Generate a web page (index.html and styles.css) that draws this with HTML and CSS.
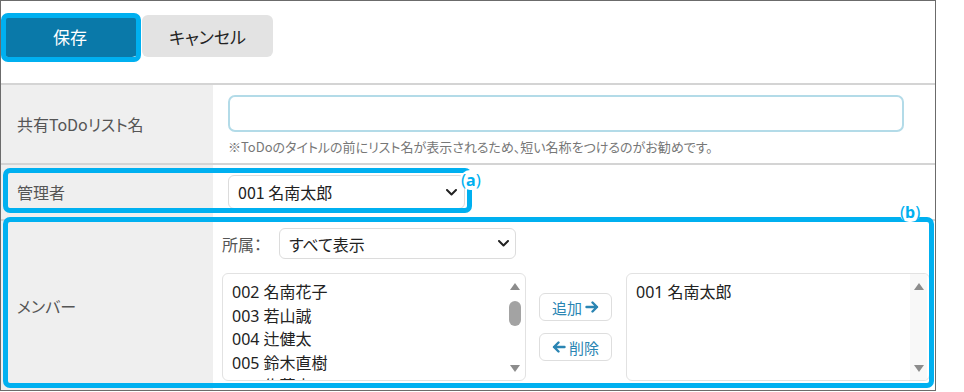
FILE: index.html
```html
<!DOCTYPE html>
<html lang="ja">
<head>
<meta charset="utf-8">
<title>共有ToDoリスト</title>
<link rel="stylesheet" href="styles.css">
</head>
<body>
<div class="frame">
  <div class="toolbar">
    <button class="btn btn-save">保存</button>
    <button class="btn btn-cancel">キャンセル</button>
  </div>
  <div class="form">
    <div class="row row-name">
      <div class="label">共有ToDoリスト名</div>
      <div class="value value-name">
        <div class="input"></div>
        <p class="hint">※ToDoのタイトルの前にリスト名が表示されるため、短い名称をつけるのがお勧めです。</p>
      </div>
    </div>
    <div class="row row-admin">
      <div class="label">管理者</div>
      <div class="value value-admin">
        <div class="select select-admin">
          <span>001 名南太郎</span>
          <svg class="chev" width="11" height="7" viewBox="0 0 11 7"><polyline points="1,1 5.5,5.5 10,1" fill="none" stroke="#222" stroke-width="2" stroke-linecap="round" stroke-linejoin="round"/></svg>
        </div>
      </div>
    </div>
    <div class="row row-member">
      <div class="label">メンバー</div>
      <div class="value value-member">
        <div class="filter">
          <span class="filter-label">所属：</span>
          <div class="select select-dept">
            <span>すべて表示</span>
            <svg class="chev" width="11" height="7" viewBox="0 0 11 7"><polyline points="1,1 5.5,5.5 10,1" fill="none" stroke="#222" stroke-width="2" stroke-linecap="round" stroke-linejoin="round"/></svg>
          </div>
        </div>
        <div class="picker">
          <div class="listbox">
            <ul class="items">
              <li>002 名南花子</li>
              <li>003 若山誠</li>
              <li>004 辻健太</li>
              <li>005 鈴木直樹</li>
              <li>006 佐藤恵</li>
            </ul>
            <div class="scrollbar">
              <svg width="10" height="7" viewBox="0 0 10 7"><polygon points="0,7 5,0 10,7" fill="#8c8c8c"/></svg>
              <span class="thumb"></span>
              <svg class="sb-down" width="10" height="7" viewBox="0 0 10 7"><polygon points="0,0 10,0 5,7" fill="#8c8c8c"/></svg>
            </div>
          </div>
          <div class="actions">
            <button class="act">追加<svg width="14" height="12" viewBox="0 0 14 12"><path d="M1.5 6H12M7.5 1.5L12 6l-4.5 4.5" fill="none" stroke="#2a85b3" stroke-width="2.4" stroke-linecap="round" stroke-linejoin="round"/></svg></button>
            <button class="act"><svg width="14" height="12" viewBox="0 0 14 12"><path d="M12.5 6H2M6.5 1.5L2 6l4.5 4.5" fill="none" stroke="#2a85b3" stroke-width="2.4" stroke-linecap="round" stroke-linejoin="round"/></svg>削除</button>
          </div>
          <div class="listbox listbox-right">
            <ul class="items">
              <li>001 名南太郎</li>
            </ul>
            <div class="scrollbar scrollbar-plain">
              <svg width="10" height="7" viewBox="0 0 10 7"><polygon points="0,7 5,0 10,7" fill="#8c8c8c"/></svg>
              <svg class="sb-down" width="10" height="7" viewBox="0 0 10 7"><polygon points="0,0 10,0 5,7" fill="#8c8c8c"/></svg>
            </div>
          </div>
        </div>
      </div>
    </div>
  </div>
  <div class="mark mark-save"></div>
  <div class="mark mark-a"></div>
  <div class="mark mark-b"></div>
  <span class="tag tag-a">(<b>a</b>)</span>
  <span class="tag tag-b">(<b>b</b>)</span>
</div>
</body>
</html>
```
FILE: styles.css
```css
body {
  margin: 0;
  background: #fff;
  font-family: "Noto Sans CJK JP", "Noto Sans", sans-serif;
  font-feature-settings: "palt";
}

.frame {
  position: relative;
  width: 936px;
  height: 391px;
  box-sizing: border-box;
  border: 1px solid #6b6b6b;
  overflow: hidden;
  background: #fff;
}

/* toolbar */
.toolbar {
  height: 84px;
  box-sizing: border-box;
  padding: 14px 0 0 1px;
  display: flex;
  align-items: flex-start;
  gap: 4px;
  border-bottom: 2px solid #d4d4d4;
}

.btn {
  height: 42px;
  border: none;
  border-radius: 6px;
  font-family: inherit;
  font-feature-settings: "palt";
  font-size: 17px;
  padding: 0;
}

.btn-save {
  width: 136px;
  background: #0a79a9;
  color: #fff;
}

.btn-cancel {
  width: 131px;
  background: #e3e3e3;
  color: #222;
}

/* form rows */
.row {
  display: flex;
  border-bottom: 2px solid #d4d4d4;
}

.label {
  width: 212px;
  flex: none;
  box-sizing: border-box;
  background: #efefef;
  display: flex;
  align-items: center;
  padding-left: 16px;
  font-size: 16px;
  color: #555;
}

.value {
  flex: 1;
  min-width: 0;
}

.value-name {
  padding: 10px 31px 7px 15px;
}

.input {
  height: 37px;
  box-sizing: border-box;
  border: 2px solid #b3dbe8;
  border-radius: 7px;
  background: #fff;
}

.hint {
  margin: 6px 0 0;
  font-size: 13px;
  line-height: 18px;
  color: #777;
}

.value-admin {
  padding: 10px 0 10px 15px;
}

.select {
  display: flex;
  align-items: center;
  justify-content: space-between;
  box-sizing: border-box;
  border: 1px solid #dcdcdc;
  border-radius: 6px;
  background: #fff;
  font-size: 16px;
  color: #222;
}

.select-admin {
  width: 237px;
  height: 34px;
  padding: 0 7px 0 9px;
}

.value-member {
  padding: 7px 6px 9px 9px;
}

.filter {
  display: flex;
  align-items: center;
  height: 31px;
}

.filter-label {
  width: 57px;
  font-size: 16px;
  color: #555;
}

.select-dept {
  width: 237px;
  height: 31px;
  padding: 0 6px 0 9px;
}

.picker {
  display: flex;
  margin-top: 14px;
  gap: 13px;
}

.listbox {
  width: 304px;
  height: 108px;
  flex: none;
  box-sizing: border-box;
  border: 1px solid #e2e2e2;
  border-radius: 6px;
  display: flex;
  overflow: hidden;
  padding-right: 2px;
  background: #fff;
}

.listbox-right {
  margin-left: 1px;
}

.items {
  flex: 1;
  list-style: none;
  margin: 0;
  padding: 7px 0 0 9px;
  font-family: "Noto Sans", "Noto Sans CJK JP", sans-serif;
  font-size: 16px;
  line-height: 23.5px;
  color: #222;
  font-feature-settings: normal;
}

.scrollbar {
  width: 17px;
  flex: none;
  display: flex;
  flex-direction: column;
  align-items: center;
  padding: 9px 0 8px;
  box-sizing: border-box;
}

.scrollbar-plain {
  background: #f8f8f8;
}

.thumb {
  width: 12px;
  height: 25px;
  border-radius: 6px;
  background: #a3a3a3;
  margin-top: 11px;
}

.sb-down {
  margin-top: auto;
}

.actions {
  width: 73px;
  flex: none;
  display: flex;
  flex-direction: column;
  gap: 12px;
  padding-top: 20px;
}

.act {
  height: 28px;
  box-sizing: border-box;
  border: 1px solid #dedede;
  border-radius: 6px;
  background: #fff;
  color: #2a85b3;
  font-family: inherit;
  font-feature-settings: "palt";
  font-size: 15px;
  display: flex;
  align-items: center;
  justify-content: center;
  gap: 3px;
  padding: 0;
}

/* annotation overlays */
.mark {
  position: absolute;
  box-sizing: border-box;
  border: 5px solid #00b0f0;
  border-radius: 7px;
}

.mark-save {
  left: 0;
  top: 12px;
  width: 140px;
  height: 49px;
}

.mark-a {
  left: 2px;
  top: 167px;
  width: 469px;
  height: 45px;
}

.mark-b {
  left: 2px;
  top: 216px;
  width: 931px;
  height: 171px;
}

.tag {
  position: absolute;
  font-family: "Noto Sans", sans-serif;
  font-weight: 400;
  font-size: 17px;
  line-height: 20px;
  color: #00b0f0;
  background: #fff;
  border-radius: 10px;
  padding: 0 1px;
}

.tag b {
  font-weight: 700;
  font-size: 16px;
}

.tag-a {
  left: 459px;
  top: 169px;
}

.tag-b {
  left: 898px;
  top: 201px;
}
```
